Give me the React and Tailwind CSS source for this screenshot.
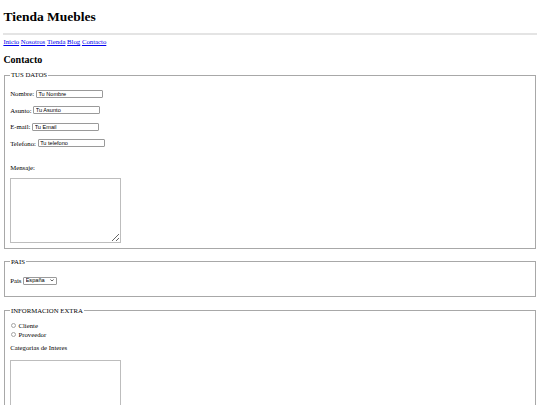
import { useState } from "react";

const inputCls =
    "w-[67px] h-[8px] border border-[#9a9a9a] rounded-[1px] px-[1.5px] text-[5.6px] leading-none font-['Liberation_Sans',Arial,sans-serif] text-black bg-white outline-none";

function Field({ label, value }) {
    return (
        <div className="flex items-center h-[9px] whitespace-pre">
            <span>{label} </span>
            <input type="text" defaultValue={value} className={inputCls} />
        </div>
    );
}

function Radio({ label, checked, onChange }) {
    return (
        <label className="flex items-center h-[9px]">
            <span
                onClick={onChange}
                className="ml-[0.7px] mr-[2.6px] w-[5px] h-[5px] rounded-full border border-[#a5a5a5] bg-white flex items-center justify-center"
            >
                {checked && <span className="w-[2.5px] h-[2.5px] rounded-full bg-[#1a73e8]" />}
            </span>
            <span>{label}</span>
        </label>
    );
}

export default function App() {
    const [tipo, setTipo] = useState("");

    return (
        <div className="px-[3.4px] pb-[20px] bg-white text-black text-[6.75px] leading-[7.5px] font-['Liberation_Serif','Times_New_Roman',serif] min-h-screen">
            {/* Cabecera */}
            <h1 className="pt-[9px] text-[13.5px] leading-[15px] font-bold">Tienda Muebles</h1>
            <div className="mt-[9px] h-[2px] bg-[#e4e4e4]" />

            <nav className="mt-[3px] flex gap-[1.7px] text-[#0000ee]">
                <a href="#" className="underline">Inicio</a>
                <a href="#" className="underline">Nosotros</a>
                <a href="#" className="underline">Tienda</a>
                <a href="#" className="underline">Blog</a>
                <a href="#" className="underline">Contacto</a>
            </nav>

            <h2 className="mt-[8.3px] text-[10px] leading-[11px] font-bold">Contacto</h2>

            <form onSubmit={(e) => e.preventDefault()}>
                {/* Tus datos */}
                <fieldset className="mt-[6.7px] mx-[0.8px] border border-[#a8a8a8] px-[5px] pb-[5px]">
                    <legend className="px-[0.8px]">TUS DATOS</legend>
                    <div className="mt-[10.5px] flex flex-col gap-[7.5px]">
                        <Field label="Nombre:" value="Tu Nombre" />
                        <Field label="Asunto:" value="Tu Asunto" />
                        <Field label="E-mail:" value="Tu Email" />
                        <Field label="Telefono:" value="Tu telefono" />
                    </div>
                    <p className="mt-[16.2px]">Mensaje:</p>
                    <textarea className="block mt-[6.8px] w-[111px] h-[65px] border border-[#bdbdbd] bg-white outline-none" />
                </fieldset>

                {/* Pais */}
                <fieldset className="mt-[8.3px] mx-[0.8px] border border-[#a8a8a8] px-[5px] pb-[11.5px]">
                    <legend className="px-[0.8px]">PAIS</legend>
                    <div className="mt-[10.5px] flex items-center h-[9px] whitespace-pre">
                        <span>Pais </span>
                        <div className="relative">
                            <select className="appearance-none w-[34px] h-[8px] border border-[#9a9a9a] rounded-[1px] pl-[1.5px] text-[5.6px] leading-none font-['Liberation_Sans',Arial,sans-serif] bg-white outline-none">
                                <option>España</option>
                                <option>Portugal</option>
                                <option>Francia</option>
                            </select>
                            <svg
                                viewBox="0 0 10 6"
                                className="absolute right-[3px] top-[2.8px] w-[4px] h-[2.5px] pointer-events-none"
                            >
                                <path d="M1 1l4 4 4-4" fill="none" stroke="#222" strokeWidth="1.8" />
                            </svg>
                        </div>
                    </div>
                </fieldset>

                {/* Informacion extra */}
                <fieldset className="mt-[9.5px] mx-[0.8px] border border-[#a8a8a8] px-[5px] pb-[10px]">
                    <legend className="px-[0.8px]">INFORMACION EXTRA</legend>
                    <div className="mt-[7px]">
                        <Radio label="Cliente" checked={tipo === "cliente"} onChange={() => setTipo("cliente")} />
                        <Radio label="Proveedor" checked={tipo === "proveedor"} onChange={() => setTipo("proveedor")} />
                    </div>
                    <p className="mt-[5px]">Categorias de Interes</p>
                    <textarea className="block mt-[8px] w-[111px] h-[65px] border border-[#bdbdbd] bg-white outline-none" />
                </fieldset>
            </form>
        </div>
    );
}
